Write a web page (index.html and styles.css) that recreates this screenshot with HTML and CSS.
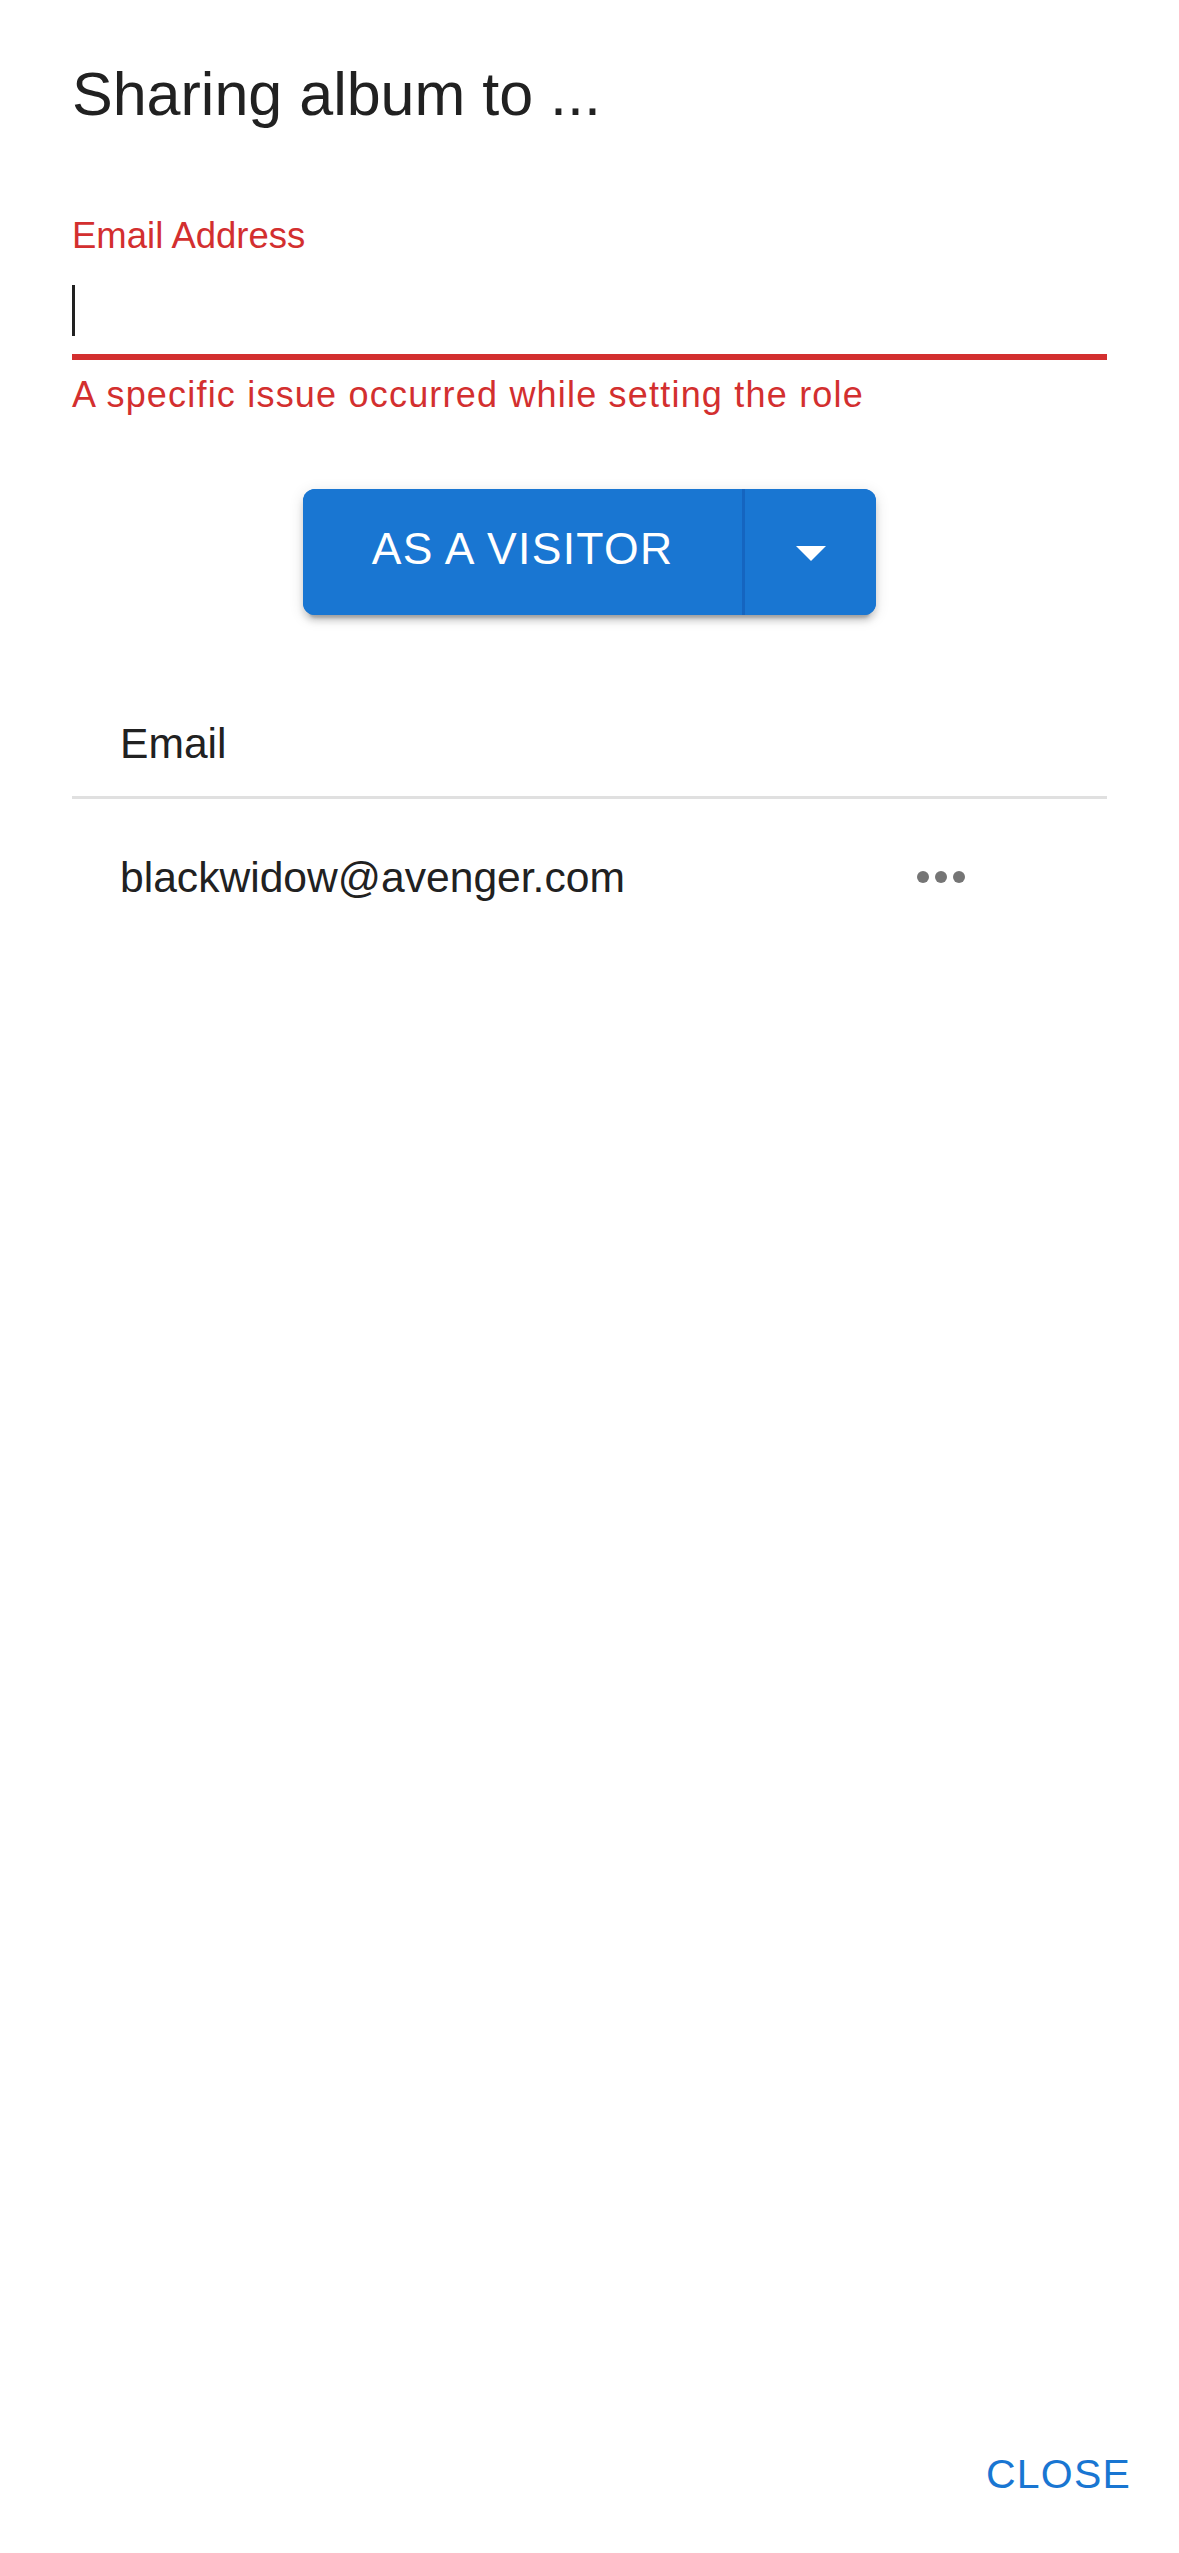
FILE: index.html
```html
<!DOCTYPE html>
<html lang="en">
<head>
<meta charset="utf-8">
<title>Sharing album</title>
<link rel="stylesheet" href="styles.css">
</head>
<body>
<div class="dialog">
  <h2 class="title">Sharing album to ...</h2>
  <div class="content">
    <div class="field">
      <label class="label">Email Address</label>
      <div class="input"><span class="cursor"></span></div>
      <div class="underline"></div>
      <p class="helper">A specific issue occurred while setting the role</p>
    </div>
    <div class="btn-row">
      <div class="split">
        <button class="split-main">AS A VISITOR</button>
        <button class="split-drop" aria-label="select role">
          <svg viewBox="0 0 24 24" width="72" height="72"><path d="M7 10l5 5 5-5z" fill="#fff"/></svg>
        </button>
      </div>
    </div>
    <div class="table">
      <div class="row head">
        <div class="cell">Email</div>
        <div class="cell act"></div>
      </div>
      <div class="row">
        <div class="cell">blackwidow@avenger.com</div>
        <div class="cell act">
          <button class="icon-btn" aria-label="more">
            <svg viewBox="0 0 24 24" width="72" height="72"><circle cx="6" cy="12" r="2" fill="#757575"/><circle cx="12" cy="12" r="2" fill="#757575"/><circle cx="18" cy="12" r="2" fill="#757575"/></svg>
          </button>
        </div>
      </div>
    </div>
  </div>
  <div class="actions">
    <button class="text-btn">CLOSE</button>
  </div>
</div>
</body>
</html>
```

FILE: styles.css
```css
html, body {
  margin: 0;
  padding: 0;
  background: #fff;
}
body {
  font-family: "Liberation Sans", Arial, sans-serif;
  color: rgba(0, 0, 0, 0.87);
}
.dialog {
  min-height: 2553px;
  display: flex;
  flex-direction: column;
  box-sizing: border-box;
}
.title {
  margin: 0;
  padding: 46px 72px 0;
  font-size: 61px;
  line-height: 96px;
  font-weight: 400;
  color: #212121;
}
.content {
  padding: 0 72px;
}
.field {
  margin-top: 70px;
  display: flex;
  flex-direction: column;
}
.label {
  font-size: 36.5px;
  line-height: 48px;
  color: #d32f2f;
}
.input {
  height: 94px;
  box-sizing: border-box;
  padding-top: 25px;
}
.cursor {
  display: block;
  width: 3px;
  height: 51px;
  background: #212121;
}
.underline {
  height: 6px;
  background: #d32f2f;
}
.helper {
  margin: 5px 0 0;
  font-size: 36px;
  line-height: 60px;
  letter-spacing: 1.2px;
  color: #d32f2f;
}
.btn-row {
  margin-top: 64px;
  display: flex;
  justify-content: center;
}
.split {
  display: flex;
  height: 126px;
  border-radius: 12px;
  background: #1976d2;
  box-shadow: 0 9px 3px -6px rgba(0,0,0,0.2), 0 6px 6px 0 rgba(0,0,0,0.14), 0 3px 15px 0 rgba(0,0,0,0.12);
  overflow: hidden;
}
.split button {
  border: 0;
  background: #1976d2;
  color: #fff;
  font-family: "Liberation Sans", Arial, sans-serif;
  cursor: pointer;
  padding: 0;
  margin: 0;
}
.split-main {
  width: 439px;
  font-size: 44.5px;
  letter-spacing: 1.3px;
  font-weight: 400;
  padding-bottom: 7px !important;
}
.split-drop {
  width: 134px;
  border-left: 3px solid #1565c0 !important;
  display: flex;
  align-items: center;
  justify-content: center;
}
.split-drop svg {
  display: block;
}
.table {
  margin-top: 73px;
}
.row {
  display: grid;
  grid-template-columns: 1fr 226px;
  align-items: center;
}
.row.head {
  border-bottom: 3px solid #e0e0e0;
}
.cell {
  font-size: 42.6px;
  line-height: 72px;
  padding: 18px 0 18px 48px;
  color: #212121;
}
.head .cell {
  padding-bottom: 17px;
  min-height: 72px;
}
.cell.act {
  padding: 18px 106px 18px 0;
  display: flex;
  justify-content: flex-start;
}
.icon-btn {
  width: 120px;
  height: 120px;
  padding: 24px;
  border: 0;
  background: transparent;
  border-radius: 50%;
  display: flex;
  align-items: center;
  justify-content: center;
}
.icon-btn svg {
  display: block;
}
.actions {
  margin-top: auto;
  padding: 24px;
  display: flex;
  justify-content: flex-end;
}
.text-btn {
  border: 0;
  background: transparent;
  color: #1976d2;
  font-family: "Liberation Sans", Arial, sans-serif;
  font-size: 41px;
  font-weight: 400;
  letter-spacing: 1.2px;
  line-height: 73.5px;
  padding: 18px 24px;
  cursor: pointer;
}
```
